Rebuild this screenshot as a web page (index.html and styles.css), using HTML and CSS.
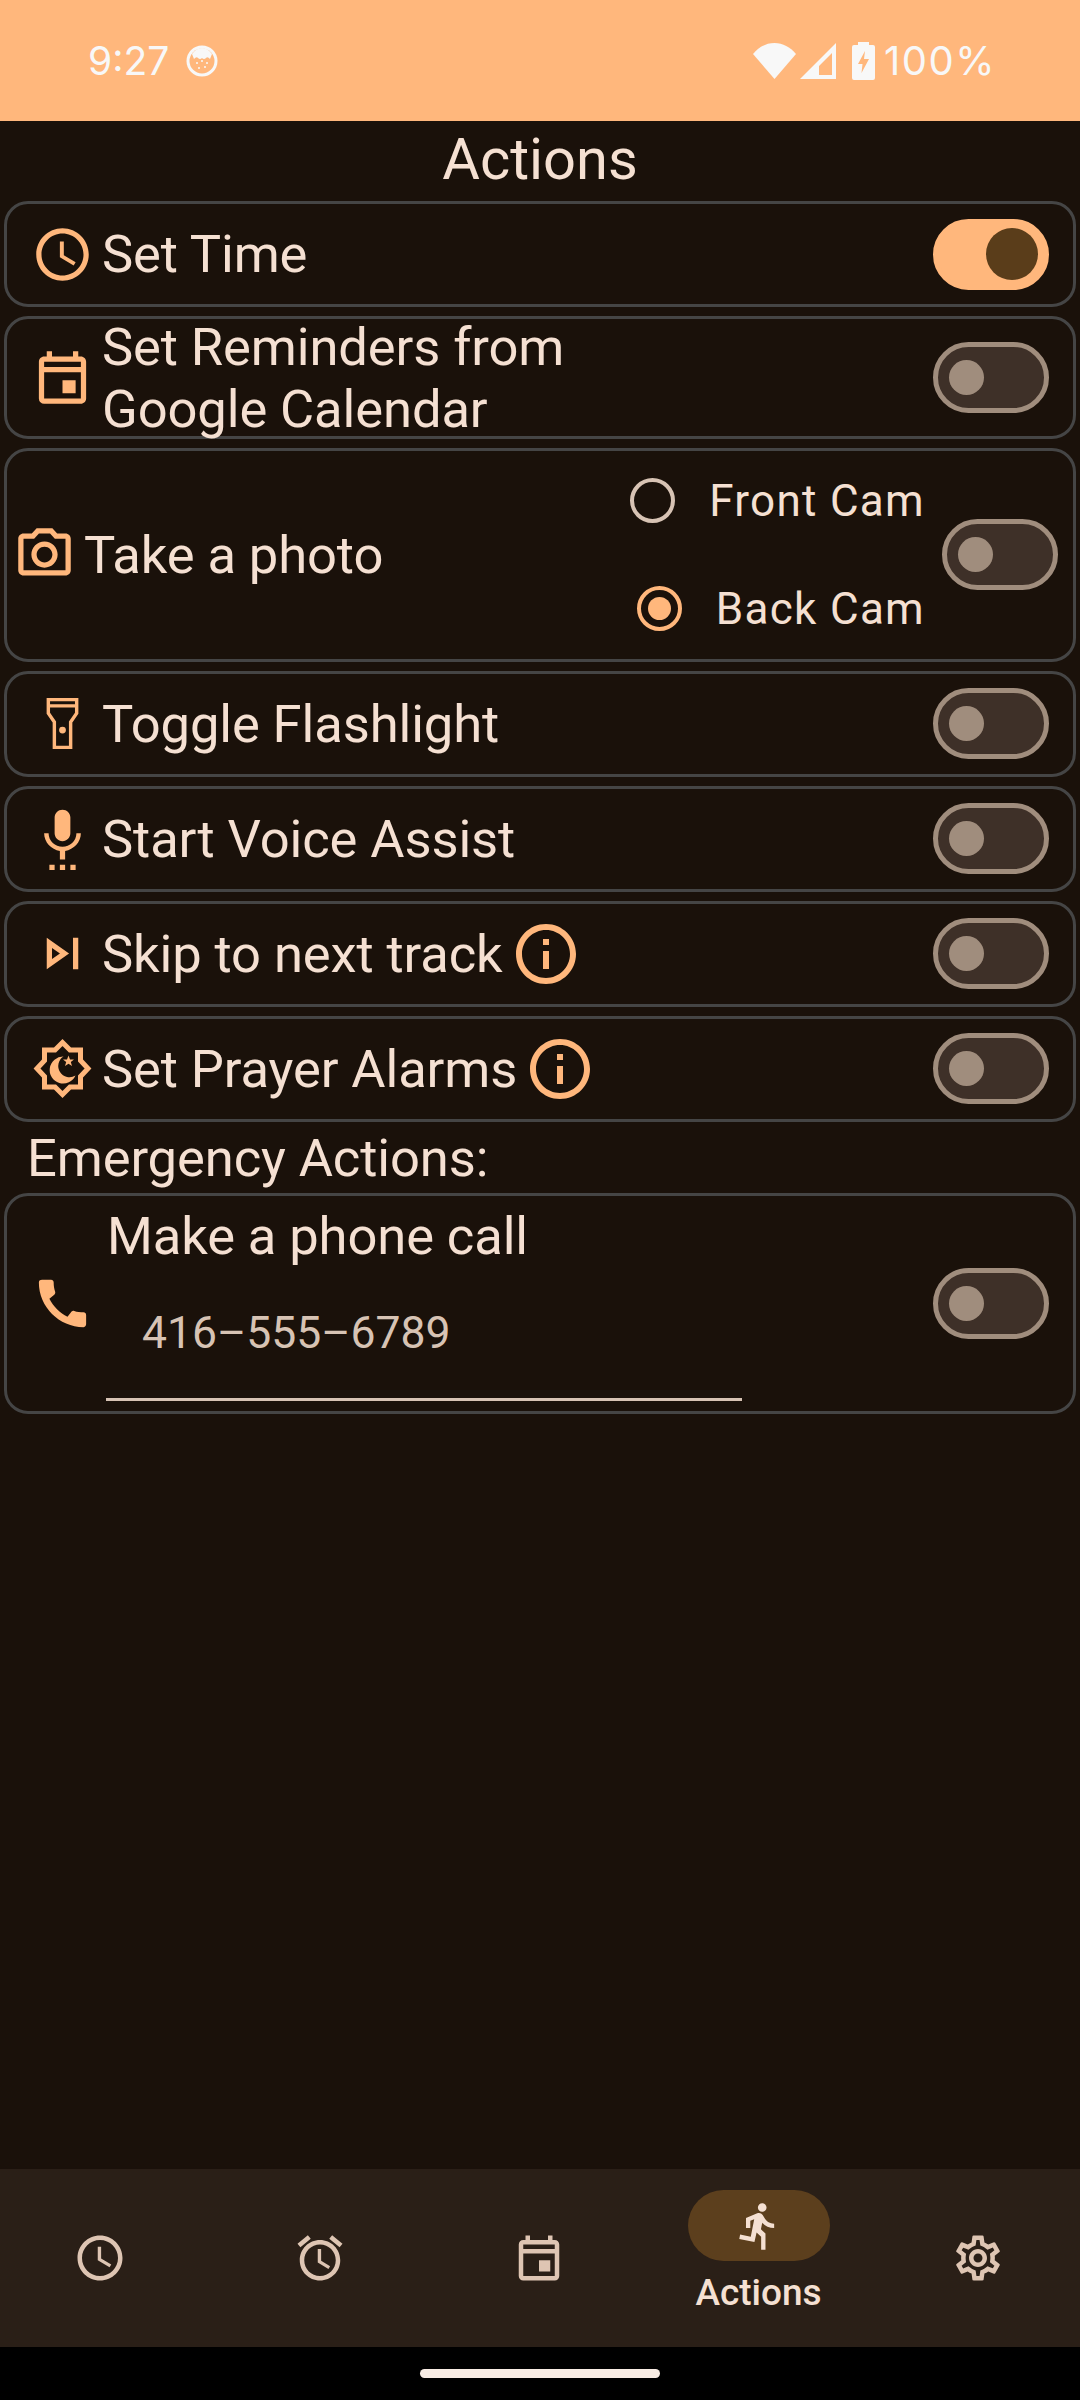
FILE: index.html
```html
<!DOCTYPE html>
<html lang="en">

<head>
    <meta charset="UTF-8">
    <meta name="viewport" content="width=device-width, initial-scale=1.0">
    <title>Actions</title>
    <link rel="stylesheet" href="styles.css">
</head>

<body>
    <div class="status-bar">
        <span class="status-time">9:27</span>
        <svg class="status-face" viewBox="0 0 32 32">
            <circle cx="16" cy="16" r="15.500" fill="#f8f8f8" />
            <circle cx="16" cy="16" r="12.500" fill="#ffb77c" />
            <path d="M6 9Q10 3 16 3T26 9L24 14Q21.500 11 20 13Q18 15 16 13Q14 15 12 13Q10.500 11 8 14z" fill="#f8f8f8" />
            <circle cx="11" cy="18" r="1" fill="#f8f8f8" />
            <circle cx="16" cy="16" r="1" fill="#f8f8f8" />
            <circle cx="21" cy="18" r="1" fill="#f8f8f8" />
            <circle cx="13" cy="23" r="1" fill="#f8f8f8" />
            <circle cx="19" cy="22" r="1" fill="#f8f8f8" />
        </svg>
        <span class="status-right">
            <svg class="status-wifi" viewBox="0 0 43 36">
                <path d="M0 11C6 4 13 0 21.500 0S37 4 43 11L21.500 36z" />
            </svg>
            <svg class="status-signal" viewBox="0 0 36 36">
                <path fill-rule="evenodd" d="M36 0V36H0zM32 10L19 23V32H32z" />
            </svg>
            <svg class="status-battery" viewBox="0 0 23 38">
                <path fill-rule="evenodd" d="M6 0H17V3H21Q23 3 23 5V36Q23 38 21 38H2Q0 38 0 36V5Q0 3 2 3H6zM13 9L6 22H10.500L9.500 31L17 17H12z" />
            </svg>
            <span class="status-pct">100%</span>
        </span>
    </div>

    <main>
        <header class="page-title">Actions</header>

        <div class="card-list">
            <div class="card">
                <svg class="icon" viewBox="0 0 24 24"><path d="M11.990 2C6.470 2 2 6.480 2 12s4.470 10 9.990 10C17.520 22 22 17.520 22 12S17.520 2 11.990 2zM12 20c-4.420 0-8-3.580-8-8s3.580-8 8-8 8 3.580 8 8-3.580 8-8 8zm.5-13H11v6l5.250 3.150.75-1.230-4.500-2.670z" /></svg>
                <span class="label">Set Time</span>
                <span class="switch on"><span class="thumb"></span></span>
            </div>

            <div class="card card-tall">
                <svg class="icon" viewBox="0 0 24 24"><path d="M19 4h-1V2h-2v2H8V2H6v2H5c-1.110 0-1.990.9-1.990 2L3 20a2 2 0 0 0 2 2h14c1.100 0 2-.9 2-2V6c0-1.100-.9-2-2-2zm0 16H5V10h14v10zm0-12H5V6h14v2zm-7 5h5v5h-5z" /></svg>
                <span class="label">Set Reminders from<br>Google Calendar</span>
                <span class="switch"><span class="thumb"></span></span>
            </div>

            <div class="card card-photo">
                <svg class="icon" viewBox="0 0 24 24"><path d="M14.120 4l1.830 2H20v12H4V6h4.050l1.830-2h4.240M15 2H9L7.170 4H4c-1.100 0-2 .9-2 2v12c0 1.100.9 2 2 2h16c1.100 0 2-.9 2-2V6c0-1.100-.9-2-2-2h-3.170L15 2zm-3 7c1.650 0 3 1.350 3 3s-1.350 3-3 3-3-1.350-3-3 1.350-3 3-3m0-2c-2.760 0-5 2.240-5 5s2.240 5 5 5 5-2.240 5-5-2.240-5-5-5z" /></svg>
                <span class="label">Take a photo</span>
                <div class="radio-group">
                    <div class="radio-row"><span class="radio"></span><span>Front Cam</span></div>
                    <div class="radio-row"><span class="radio checked"></span><span>Back Cam</span></div>
                </div>
                <span class="switch switch-photo"><span class="thumb"></span></span>
            </div>

            <div class="card">
                <svg class="icon" viewBox="0 0 24 24">
                    <path class="torch-line" d="M6.600 2.900h10.800v5.200l-2.300 3.300v9.700H8.900v-9.700L6.600 8.100zM6.600 5.300h10.800" />
                    <circle cx="12" cy="14.500" r="1.300" />
                </svg>
                <span class="label">Toggle Flashlight</span>
                <span class="switch"><span class="thumb"></span></span>
            </div>

            <div class="card">
                <svg class="icon" viewBox="0 0 24 24"><path d="M7 24h2v-2H7v2zm5-11c1.660 0 2.990-1.340 2.990-3L15 4c0-1.660-1.340-3-3-3S9 2.340 9 4v6c0 1.660 1.340 3 3 3zm-1 11h2v-2h-2v2zm4 0h2v-2h-2v2zm4-14h-1.700c0 3-2.540 5.100-5.300 5.100S6.700 13 6.700 10H5c0 3.410 2.720 6.230 6 6.720V20h2v-3.280c3.280-.49 6-3.310 6-6.720z" /></svg>
                <span class="label">Start Voice Assist</span>
                <span class="switch"><span class="thumb"></span></span>
            </div>

            <div class="card">
                <svg class="icon" viewBox="0 0 24 24"><path d="M6 18l8.500-6L6 6v12zM8 9.860L11.030 12 8 14.140V9.860zM16 6h2v12h-2z" /></svg>
                <span class="label">Skip to next track</span>
                <svg class="icon-info" viewBox="0 0 24 24"><path d="M11 7h2v2h-2zm0 4h2v6h-2zm1-9C6.480 2 2 6.480 2 12s4.480 10 10 10 10-4.480 10-10S17.520 2 12 2zm0 18c-4.410 0-8-3.590-8-8s3.590-8 8-8 8 3.590 8 8-3.590 8-8 8z" /></svg>
                <span class="switch"><span class="thumb"></span></span>
            </div>

            <div class="card">
                <svg class="icon" viewBox="-2.500 -2.500 63 63">
                    <polygon class="star-line" points="29,3 36.500,10.500 47,10.500 47,21 54.500,29 47,37 47,47.500 36.500,47.500 29,55 21.500,47.500 11,47.500 11,37 3.500,29 11,21 11,10.500 21.500,10.500" />
                    <path d="M30 17A13.500 13.500 0 1 0 42 36A11 11 0 0 1 30 17z" />
                    <polygon points="35,16 36.500,20 40.500,20 37.300,22.600 38.500,26.500 35,24.200 31.500,26.500 32.700,22.600 29.500,20 33.500,20" />
                </svg>
                <span class="label">Set Prayer Alarms</span>
                <svg class="icon-info" viewBox="0 0 24 24"><path d="M11 7h2v2h-2zm0 4h2v6h-2zm1-9C6.480 2 2 6.480 2 12s4.480 10 10 10 10-4.480 10-10S17.520 2 12 2zm0 18c-4.410 0-8-3.590-8-8s3.590-8 8-8 8 3.590 8 8-3.590 8-8 8z" /></svg>
                <span class="switch"><span class="thumb"></span></span>
            </div>
        </div>

        <div class="section-label">Emergency Actions:</div>

        <div class="card card-call">
            <svg class="icon" viewBox="0 0 24 24"><path d="M20.010 15.380c-1.230 0-2.420-.2-3.530-.56-.35-.12-.74-.03-1.010.24l-1.570 1.970c-2.830-1.350-5.480-3.900-6.890-6.830l1.950-1.660c.27-.28.35-.67.24-1.020-.37-1.110-.56-2.300-.56-3.530 0-.54-.45-.99-.99-.99H4.190C3.650 3 3 3.240 3 3.990 3 13.280 10.730 21 20.010 21c.71 0 .99-.63.99-1.180v-3.450c0-.54-.45-.99-.99-.99z" /></svg>
            <div class="call-body">
                <span class="label">Make a phone call</span>
                <div class="phone-field">416–555–6789</div>
            </div>
            <span class="switch"><span class="thumb"></span></span>
        </div>
    </main>

    <nav class="bottom-nav">
        <div class="nav-item">
            <svg class="nav-icon" viewBox="0 0 24 24"><path d="M11.990 2C6.470 2 2 6.480 2 12s4.470 10 9.990 10C17.520 22 22 17.520 22 12S17.520 2 11.990 2zM12 20c-4.420 0-8-3.580-8-8s3.580-8 8-8 8 3.580 8 8-3.580 8-8 8zm.5-13H11v6l5.250 3.150.75-1.230-4.500-2.670z" /></svg>
        </div>
        <div class="nav-item">
            <svg class="nav-icon" viewBox="0 0 24 24"><path d="M22 5.720l-4.600-3.860-1.290 1.530 4.600 3.860L22 5.720zM7.880 3.390L6.600 1.860 2 5.710l1.290 1.530 4.590-3.850zM12.500 8H11v6l4.750 2.850.75-1.230-4-2.370V8zM12 4c-4.970 0-9 4.030-9 9s4.030 9 9 9 9-4.030 9-9-4.030-9-9-9zm0 16c-3.870 0-7-3.130-7-7s3.130-7 7-7 7 3.130 7 7-3.130 7-7 7z" /></svg>
        </div>
        <div class="nav-item">
            <svg class="nav-icon" viewBox="0 0 24 24"><path d="M19 4h-1V2h-2v2H8V2H6v2H5c-1.110 0-1.990.9-1.990 2L3 20a2 2 0 0 0 2 2h14c1.100 0 2-.9 2-2V6c0-1.100-.9-2-2-2zm0 16H5V10h14v10zm0-12H5V6h14v2zm-7 5h5v5h-5z" /></svg>
        </div>
        <div class="nav-item nav-item-active">
            <span class="nav-pill">
                <svg class="nav-icon nav-icon-active" viewBox="0 0 24 24"><path d="M13.490 5.480c1.100 0 2-.9 2-2s-.9-2-2-2-2 .9-2 2 .9 2 2 2zm-3.600 13.900l1-4.400 2.100 2v6h2v-7.500l-2.100-2 .6-3c1.300 1.500 3.300 2.500 5.500 2.500v-2c-1.900 0-3.500-1-4.300-2.400l-1-1.600c-.4-.6-1-1-1.700-1-.3 0-.5.1-.8.1l-5.200 2.200v4.700h2v-3.400l1.800-.7-1.600 8.100-4.900-1-.4 2 7 1.400z" /></svg>
            </span>
            <span class="nav-label">Actions</span>
        </div>
        <div class="nav-item">
            <svg class="nav-icon" viewBox="0 0 24 24"><path d="M19.430 12.980c.04-.32.07-.64.07-.98 0-.34-.03-.66-.07-.98l2.110-1.650c.19-.15.24-.42.12-.64l-2-3.460c-.09-.16-.26-.25-.44-.25-.06 0-.12.01-.17.03l-2.490 1c-.52-.4-1.080-.73-1.690-.98l-.38-2.650C14.460 2.180 14.250 2 14 2h-4c-.25 0-.46.18-.49.42l-.38 2.650c-.61.25-1.170.59-1.690.98l-2.490-1c-.06-.02-.12-.03-.18-.03-.17 0-.34.09-.43.25l-2 3.460c-.13.22-.07.49.12.64l2.110 1.650c-.04.32-.07.65-.07.98 0 .33.03.66.07.98l-2.110 1.650c-.19.15-.24.42-.12.64l2 3.460c.09.16.26.25.44.25.06 0 .12-.01.17-.03l2.490-1c.52.4 1.080.73 1.690.98l.38 2.650c.03.24.24.42.49.42h4c.25 0 .46-.18.49-.42l.38-2.650c.61-.25 1.170-.59 1.690-.98l2.490 1c.06.02.12.03.18.03.17 0 .34-.09.43-.25l2-3.460c.12-.22.07-.49-.12-.64l-2.110-1.650zm-1.980-1.710c.04.31.05.52.05.73 0 .21-.02.43-.05.73l-.14 1.130.89.7 1.080.84-.7 1.210-1.270-.51-1.040-.42-.9.68c-.43.32-.84.56-1.250.73l-1.060.43-.16 1.130-.2 1.350h-1.400l-.19-1.350-.16-1.130-1.060-.43c-.43-.18-.83-.41-1.230-.71l-.91-.7-1.060.43-1.270.51-.7-1.210 1.080-.84.89-.7-.14-1.130c-.03-.31-.05-.54-.05-.74s.02-.43.05-.73l.14-1.130-.89-.7-1.080-.84.7-1.210 1.270.51 1.040.42.9-.68c.43-.32.84-.56 1.250-.73l1.060-.43.16-1.130.2-1.350h1.390l.19 1.350.16 1.130 1.060.43c.43.18.83.41 1.230.71l.91.7 1.060-.43 1.270-.51.7 1.210-1.070.85-.89.7.14 1.130zM12 8c-2.210 0-4 1.790-4 4s1.790 4 4 4 4-1.790 4-4-1.790-4-4-4zm0 6c-1.100 0-2-.9-2-2s.9-2 2-2 2 .9 2 2-.9 2-2 2z" /></svg>
        </div>
    </nav>

    <div class="gesture-bar"><span class="gesture-handle"></span></div>
</body>

</html>
```

FILE: styles.css
```css
body {
    font-family: Roboto, "Liberation Sans", sans-serif;
    background-color: #1a110a;
    color: #f5e0d2;
    margin: 0;
    width: 1080px;
    height: 2400px;
    display: flex;
    flex-direction: column;
    overflow: hidden;
}

/* status bar */
.status-bar {
    height: 121px;
    flex: none;
    background-color: #ffb77c;
    display: flex;
    align-items: center;
    padding: 0 84px 0 88px;
    color: #f8f8f8;
    font-family: Inter, Roboto, sans-serif;
    font-size: 39px;
}

.status-face {
    width: 32px;
    height: 32px;
    margin-left: 17px;
}

.status-right {
    margin-left: auto;
    display: flex;
    align-items: center;
}

.status-right svg {
    fill: #f8f8f8;
}

.status-wifi {
    width: 43px;
    height: 36px;
}

.status-signal {
    width: 36px;
    height: 36px;
    margin-left: 4px;
}

.status-battery {
    width: 23px;
    height: 38px;
    margin-left: 16px;
}

.status-pct {
    margin-left: 9px;
    font-size: 40px;
    letter-spacing: 1.500px;
}

/* content */
main {
    flex: 1;
    padding: 0 4px;
}

.page-title {
    height: 76px;
    line-height: 76px;
    margin-bottom: 4px;
    font-size: 57.75px;
    text-align: center;
}

.card-list {
    display: flex;
    flex-direction: column;
    gap: 9px;
}

.card {
    box-sizing: border-box;
    height: 106px;
    display: flex;
    align-items: center;
    padding: 0 24px 0 24px;
    border: 3px solid #454545;
    border-radius: 24px;
}

.card-tall {
    height: 123px;
}

.card-photo {
    height: 213.6px;
    padding: 0 15px 0 6px;
}

.card-call {
    height: 221px;
}

.icon {
    width: 63px;
    height: 63px;
    flex: none;
    fill: #ffb77c;
}

.star-line {
    fill: none;
    stroke: #ffb77c;
    stroke-width: 5px;
}

.torch-line {
    fill: none;
    stroke: #ffb77c;
    stroke-width: 1.300px;
}

.label {
    font-size: 52.5px;
    letter-spacing: -0.1px;
    line-height: 62px;
    margin-left: 8px;
}

.icon-info {
    width: 72px;
    height: 72px;
    flex: none;
    fill: #ffb77c;
    margin-left: 7px;
}

/* switches */
.switch {
    box-sizing: border-box;
    width: 116px;
    height: 71px;
    flex: none;
    margin-left: auto;
    padding-left: 11px;
    display: flex;
    align-items: center;
    background-color: #3e3028;
    border: 5px solid #a08d7d;
    border-radius: 36px;
}

.thumb {
    width: 35px;
    height: 35px;
    border-radius: 50%;
    background-color: #a08d7d;
}

.switch.on {
    background-color: #ffb77c;
    border-color: #ffb77c;
    justify-content: flex-end;
    padding: 0 6px 0 0;
}

.switch.on .thumb {
    width: 52px;
    height: 52px;
    background-color: #5a3d1a;
}

.switch-photo {
    margin-left: 17px;
}

/* radios */
.radio-group {
    margin-left: auto;
    display: flex;
    flex-direction: column;
    align-items: flex-end;
    gap: 63px;
    font-size: 44px;
    letter-spacing: 1.300px;
}

.radio-row {
    display: flex;
    align-items: center;
    gap: 34px;
    line-height: 44px;
}

.radio {
    box-sizing: border-box;
    width: 45px;
    height: 45px;
    border: 4px solid #d7c3b4;
    border-radius: 50%;
    display: flex;
    align-items: center;
    justify-content: center;
}

.radio.checked {
    border-color: #ffb77c;
}

.radio.checked::after {
    content: "";
    width: 23px;
    height: 23px;
    border-radius: 50%;
    background-color: #ffb77c;
}

.section-label {
    height: 62px;
    line-height: 62px;
    margin: 5px 0 4px 23px;
    font-size: 52.5px;
    letter-spacing: -0.1px;
}

/* phone field */
.call-body {
    display: flex;
    flex-direction: column;
    margin-left: 12px;
}

.call-body .label {
    margin-left: 1px;
}

.phone-field {
    box-sizing: border-box;
    width: 636px;
    height: 134px;
    line-height: 133px;
    padding-left: 36px;
    border-bottom: 3px solid #d7c3b4;
    color: #d7c3b4;
    font-size: 44.5px;
}

/* bottom nav */
.bottom-nav {
    height: 178px;
    flex: none;
    background-color: #2a1f17;
    display: flex;
    justify-content: space-between;
    padding: 0 31px 0 29px;
}

.nav-item {
    width: 142px;
    display: flex;
    flex-direction: column;
    align-items: center;
    justify-content: center;
}

.nav-item-active {
    justify-content: flex-start;
    padding-top: 21px;
}

.nav-icon {
    width: 54px;
    height: 54px;
    fill: #dec5b3;
}

.nav-pill {
    width: 142px;
    height: 71px;
    border-radius: 36px;
    background-color: #5c3f1d;
    display: flex;
    align-items: center;
    justify-content: center;
}

.nav-icon-active {
    width: 52px;
    height: 52px;
    fill: #f5e0d2;
}

.nav-label {
    margin-top: 10px;
    font-size: 37px;
    font-weight: 500;
    line-height: 44px;
}

.gesture-bar {
    height: 53px;
    flex: none;
    background-color: #000;
    display: flex;
    justify-content: center;
    padding-top: 22px;
    box-sizing: border-box;
}

.gesture-handle {
    width: 240px;
    height: 9px;
    border-radius: 5px;
    background-color: #f8ece4;
}
```
